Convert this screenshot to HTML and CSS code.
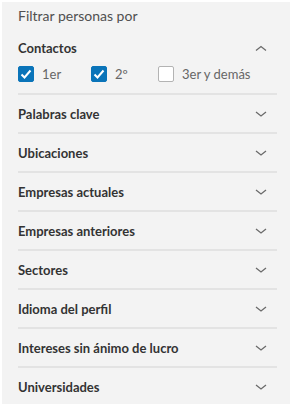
FILE: index.html
```html
<!DOCTYPE html>
<html lang="es">
<head>
  <meta charset="UTF-8" />
  <meta name="viewport" content="width=device-width, initial-scale=1.0"/>
  <title>Filtrar personas</title>
  <link rel="stylesheet" href="styles.css">
</head>
<body>

  <div class="panel">
    <h2 class="panel-title">Filtrar personas por</h2>

    <!-- Contactos (abierto) -->
    <div class="filter open">
      <div class="filter-head">
        <span>Contactos</span>
        <svg class="chevron" width="12" height="6" viewBox="0 0 12 6"><path d="M1 5.5 L6 1.5 L11 5.5"/></svg>
      </div>
      <div class="options">
        <label class="option"><span class="box checked"><svg width="16" height="16" viewBox="0 0 16 16"><path d="M3.5 8.5 L6.5 11.5 L12.5 4.5"/></svg></span>1er</label>
        <label class="option"><span class="box checked"><svg width="16" height="16" viewBox="0 0 16 16"><path d="M3.5 8.5 L6.5 11.5 L12.5 4.5"/></svg></span>2º</label>
        <label class="option"><span class="box"></span>3er y demás</label>
      </div>
    </div>

    <div class="filter">
      <div class="filter-head"><span>Palabras clave</span><svg class="chevron" width="12" height="6" viewBox="0 0 12 6"><path d="M1 1 L6 5 L11 1"/></svg></div>
    </div>
    <div class="filter">
      <div class="filter-head"><span>Ubicaciones</span><svg class="chevron" width="12" height="6" viewBox="0 0 12 6"><path d="M1 1 L6 5 L11 1"/></svg></div>
    </div>
    <div class="filter">
      <div class="filter-head"><span>Empresas actuales</span><svg class="chevron" width="12" height="6" viewBox="0 0 12 6"><path d="M1 1 L6 5 L11 1"/></svg></div>
    </div>
    <div class="filter">
      <div class="filter-head"><span>Empresas anteriores</span><svg class="chevron" width="12" height="6" viewBox="0 0 12 6"><path d="M1 1 L6 5 L11 1"/></svg></div>
    </div>
    <div class="filter">
      <div class="filter-head"><span>Sectores</span><svg class="chevron" width="12" height="6" viewBox="0 0 12 6"><path d="M1 1 L6 5 L11 1"/></svg></div>
    </div>
    <div class="filter">
      <div class="filter-head"><span>Idioma del perfil</span><svg class="chevron" width="12" height="6" viewBox="0 0 12 6"><path d="M1 1 L6 5 L11 1"/></svg></div>
    </div>
    <div class="filter">
      <div class="filter-head"><span>Intereses sin ánimo de lucro</span><svg class="chevron" width="12" height="6" viewBox="0 0 12 6"><path d="M1 1 L6 5 L11 1"/></svg></div>
    </div>
    <div class="filter">
      <div class="filter-head"><span>Universidades</span><svg class="chevron" width="12" height="6" viewBox="0 0 12 6"><path d="M1 1 L6 5 L11 1"/></svg></div>
    </div>
  </div>

</body>
</html>
```

FILE: styles.css
```css
body {
  margin: 0; padding: 2px; background: #fff;
  font-family: Lato, "Open Sans", sans-serif;
}
.panel {
  background: #f3f3f3; height: 402px; box-sizing: border-box;
  padding: 4px 13px 0 16px;
}
.panel-title {
  margin: 0; font-size: 14px; font-weight: normal; line-height: 20px;
  color: #505050;
}
.filter { border-top: 2px solid #e3e3e3; }
.filter.open { border-top: none; margin-top: 12px; padding-bottom: 10px; }
.filter-head {
  display: flex; justify-content: space-between; align-items: center;
  height: 37px; padding-right: 10px;
  font-size: 13px; font-weight: bold; color: #333;
}
.open .filter-head { height: 20px; }
.chevron { fill: none; stroke: #6a6a6a; stroke-width: 1.3; }
.options {
  display: grid; grid-template-columns: 73px 67px auto;
  margin-top: 7px; height: 18px; align-items: center;
  font-size: 13px; color: #666;
}
.option { display: flex; align-items: center; }
.box {
  width: 16px; height: 16px; border-radius: 2px; box-sizing: border-box;
  border: 1px solid #b3b3b3; background: #fff; margin-right: 8px;
  display: inline-flex;
}
.box.checked { background: #0a74b9; border-color: #0a74b9; }
.box svg { margin: -1px; fill: none; stroke: #fff; stroke-width: 2; }
```
